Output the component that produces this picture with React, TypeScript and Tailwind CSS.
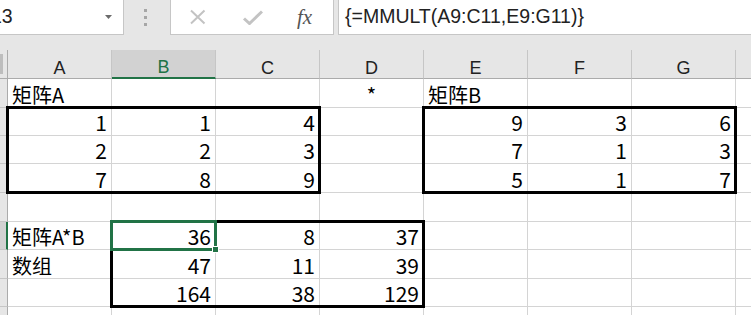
import React from 'react';

const COLS = ['A', 'B', 'C', 'D', 'E', 'F', 'G'];

// gridline pixels inside the sheet area (x from left, y from top of column headers)
const V = [7, 111, 215, 319, 423, 527, 631, 735];
const H = [28, 57, 85, 113, 142, 171, 199, 228, 256];

type Val = string | number | null;

const ROWS: { h: string; cells: Val[]; active?: boolean }[] = [
  { h: 'h-[29px]', cells: ['矩阵A', null, null, '*', '矩阵B', null, null] },
  { h: 'h-[28px]', cells: [1, 1, 4, null, 9, 3, 6] },
  { h: 'h-[28px]', cells: [2, 2, 3, null, 7, 1, 3] },
  { h: 'h-[29px]', cells: [7, 8, 9, null, 5, 1, 7] },
  { h: 'h-[29px]', cells: [] },
  { h: 'h-[28px]', cells: ['矩阵A*B', 36, 8, 37], active: true },
  { h: 'h-[29px]', cells: ['数组', 47, 11, 39] },
  { h: 'h-[28px]', cells: [null, 164, 38, 129] },
  { h: 'h-[20px]', cells: [] },
];

const frame = (c0: number, r0: number, c1: number, r1: number) => ({
  left: V[c0] - 1,
  top: H[r0] - 1,
  width: V[c1] - V[c0] + 3,
  height: H[r1] - H[r0] + 3,
});

function FormulaBar() {
  return (
    <div className="h-[50px] bg-[#e6e6e6] font-['Liberation_Sans',Arial,sans-serif]">
      <div className="flex h-[35px]">
        <div className="flex w-[124px] items-center overflow-hidden border-r border-b border-[#c6c6c6] bg-white">
          <span className="ml-[-22px] text-[19.5px] leading-none text-[#222]">B13</span>
          <svg className="ml-auto mr-[10px]" width="8" height="4" viewBox="0 0 8 4">
            <polygon points="0,0 7,0 3.5,4" fill="#6b6b6b" />
          </svg>
        </div>
        <div className="flex w-[46px] flex-col items-center justify-start gap-[4px] pt-[9px] pr-[3px]">
          <span className="h-[3px] w-[3px] bg-[#a6a6a6]" />
          <span className="h-[3px] w-[3px] bg-[#a6a6a6]" />
          <span className="h-[3px] w-[3px] bg-[#a6a6a6]" />
        </div>
        <div className="flex w-[164px] items-center border-x border-b border-[#c6c6c6] bg-white">
          <svg className="ml-[18px]" width="18" height="16" viewBox="0 0 18 16">
            <path d="M2 1.5 L15.5 14.5 M15.5 1.5 L2 14.5" stroke="#c3c3c3" strokeWidth="2" fill="none" />
          </svg>
          <svg className="ml-[35px]" width="21" height="15" viewBox="0 0 21 15">
            <path d="M2 8.5 L7.5 13.5 L20 1.5" stroke="#c3c3c3" strokeWidth="3" fill="none" />
          </svg>
          <span className="ml-[34px] font-['Liberation_Serif',serif] text-[21px] italic leading-none text-[#555]">
            fx
          </span>
        </div>
        <div className="ml-[4px] flex flex-1 items-center border-l border-b border-[#c6c6c6] bg-white pl-[6px]">
          <span className="text-[19.5px] leading-none text-[#222]">{'{=MMULT(A9:C11,E9:G11)}'}</span>
        </div>
      </div>
    </div>
  );
}

function Cell({ v }: { v: Val }) {
  const isNum = typeof v === 'number';
  const center = v === '*';
  return (
    <div
      className={`flex w-[104px] shrink-0 items-end border-r border-b border-[#d4d4d4] px-[4px] pb-[2px] leading-none ${
        isNum ? 'justify-end text-[21px]' : center ? 'justify-center' : 'justify-start'
      }`}
    >
      {v !== null && <span className="whitespace-nowrap">{v}</span>}
    </div>
  );
}

function Sheet() {
  return (
    <div className="relative font-['Noto_Sans_CJK_SC',sans-serif] text-[20px] text-black">
      <div className="flex h-[29px] bg-[#e6e6e6] font-['Liberation_Sans',Arial,sans-serif] text-[18px] leading-none text-[#222]">
        <div className="flex w-[8px] shrink-0 items-center border-r border-b border-[#ababab]">
          <span className="h-[20px] w-[3px] bg-[#bdbdbd]" />
        </div>
        {COLS.map((c) => (
          <div
            key={c}
            className={`flex w-[104px] shrink-0 items-end justify-center pb-[1px] ${
              c === 'B'
                ? 'border-r border-b-2 border-r-[#c6c6c6] border-b-[#217346] bg-[#d2d2d2] text-[#217346]'
                : 'border-r border-b border-r-[#c6c6c6] border-b-[#ababab]'
            }`}
          >
            {c}
          </div>
        ))}
        <div className="flex-1 border-b border-[#ababab]" />
      </div>
      {ROWS.map((r, i) => (
        <div key={i} className={`flex ${r.h}`}>
          <div
            className={`w-[8px] shrink-0 border-b border-b-[#c6c6c6] ${
              r.active ? 'border-r-2 border-r-[#217346] bg-[#d2d2d2]' : 'border-r border-r-[#ababab] bg-[#e6e6e6]'
            }`}
          />
          {COLS.map((c, j) => (
            <Cell key={c} v={r.cells[j] ?? null} />
          ))}
          <div className="flex-1 border-b border-[#d4d4d4]" />
        </div>
      ))}

      {/* range borders and the active cell */}
      <div className="absolute border-[3px] border-black" style={frame(0, 1, 3, 4)} />
      <div className="absolute border-[3px] border-black" style={frame(4, 1, 7, 4)} />
      <div className="absolute border-[3px] border-black" style={frame(1, 5, 4, 8)} />
      <div className="absolute border-[3px] border-[#217346]" style={frame(1, 5, 2, 6)} />
      <div
        className="absolute h-[7px] w-[7px] border border-white bg-[#217346]"
        style={{ left: V[2] - 3, top: H[6] - 3 }}
      />
    </div>
  );
}

export default function App() {
  return (
    <div className="h-[315px] w-[751px] overflow-hidden bg-white">
      <FormulaBar />
      <Sheet />
    </div>
  );
}
